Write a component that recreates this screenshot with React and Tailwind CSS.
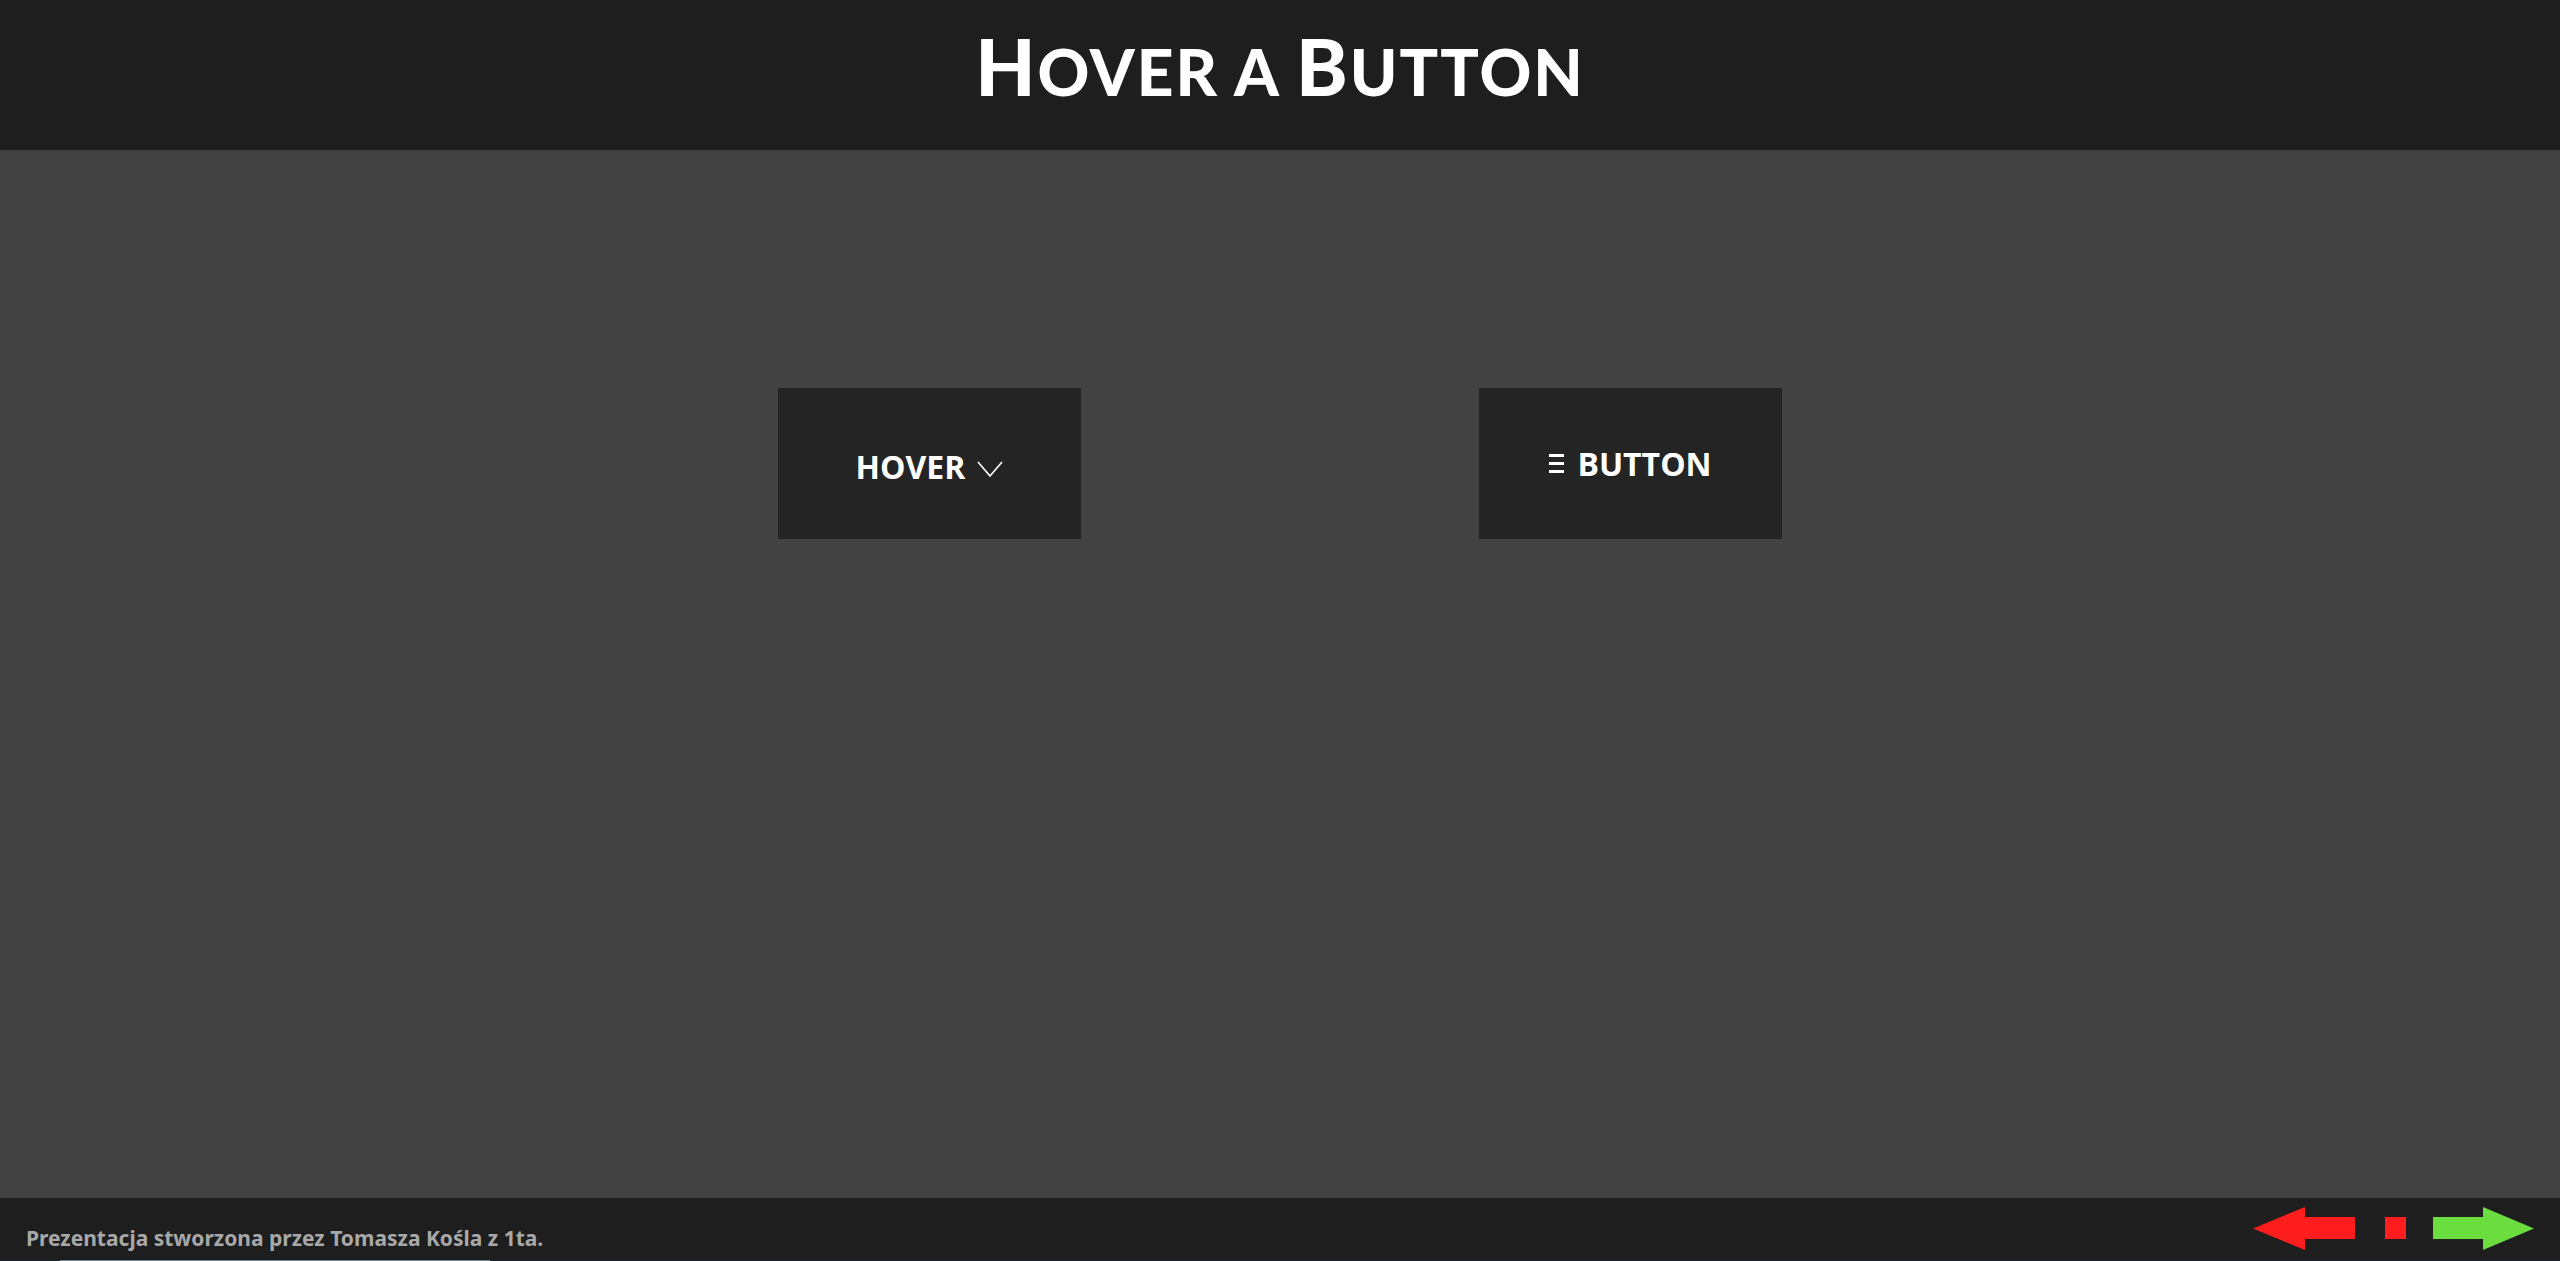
const Caps = ({ big, rest }) => (
  <span>
    <span className="text-[78px]">{big}</span>
    {rest}
  </span>
);

const HoverButton = ({ children }) => (
  <button className="flex h-[151px] w-[303px] items-center justify-center bg-[#242424] text-white">
    {children}
  </button>
);

export default function App() {
  return (
    <div className="flex h-[1261px] w-full flex-col overflow-hidden bg-[#424242]">
      <header className="flex h-[150px] shrink-0 items-center justify-center bg-[#1e1e1e]">
        <h1 className="mb-[19px] font-['Lato',sans-serif] text-[64px] font-black leading-none tracking-[2px] text-white">
          <Caps big="H" rest="OVER" /> A <Caps big="B" rest="UTTON" />
        </h1>
      </header>

      <main className="flex flex-1 justify-center gap-[398px] pt-[238px] font-['Open_Sans',sans-serif] text-[32px] font-bold">
        <HoverButton>
          <span className="mt-[7px] flex items-center gap-[12px]">
            HOVER
            <svg width="26" height="16" viewBox="0 0 26 16" className="mt-[4px]">
              <polyline points="1,1 13,15 25,1" fill="none" stroke="white" strokeWidth="1.6" />
            </svg>
          </span>
        </HoverButton>
        <HoverButton>
          <span className="flex items-center gap-[13px]">
            <span className="flex w-[15px] flex-col gap-[5px]">
              <span className="h-[3px] bg-white" />
              <span className="h-[3px] bg-white" />
              <span className="h-[3px] bg-white" />
            </span>
            BUTTON
          </span>
        </HoverButton>
      </main>

      <footer className="relative flex h-[63px] shrink-0 items-center justify-between bg-[#1e1e1e] pl-[26px] pr-[26px]">
        <p className="mt-[18px] font-['Noto_Sans',sans-serif] text-[21px] font-bold text-[#a8a8a8]">
          Prezentacja stworzona przez Tomasza Kośla z 1ta.
        </p>
        <svg width="281" height="43" viewBox="0 0 281 43" className="mb-[2px]">
          <polygon points="0,21.5 52,0 52,10 102,10 102,32 52,32 52,43" fill="#ff1d1d" />
          <rect x="132" y="10" width="21" height="22" fill="#ff1d1d" />
          <polygon points="180,10 230,10 230,0 281,21.5 230,43 230,32 180,32" fill="#6bdd3f" />
        </svg>
        <div className="absolute inset-x-0 bottom-0 flex h-px bg-[#17262f]">
          <div className="ml-[60px] w-[430px] bg-[#6f8796]" />
        </div>
      </footer>
    </div>
  );
}
